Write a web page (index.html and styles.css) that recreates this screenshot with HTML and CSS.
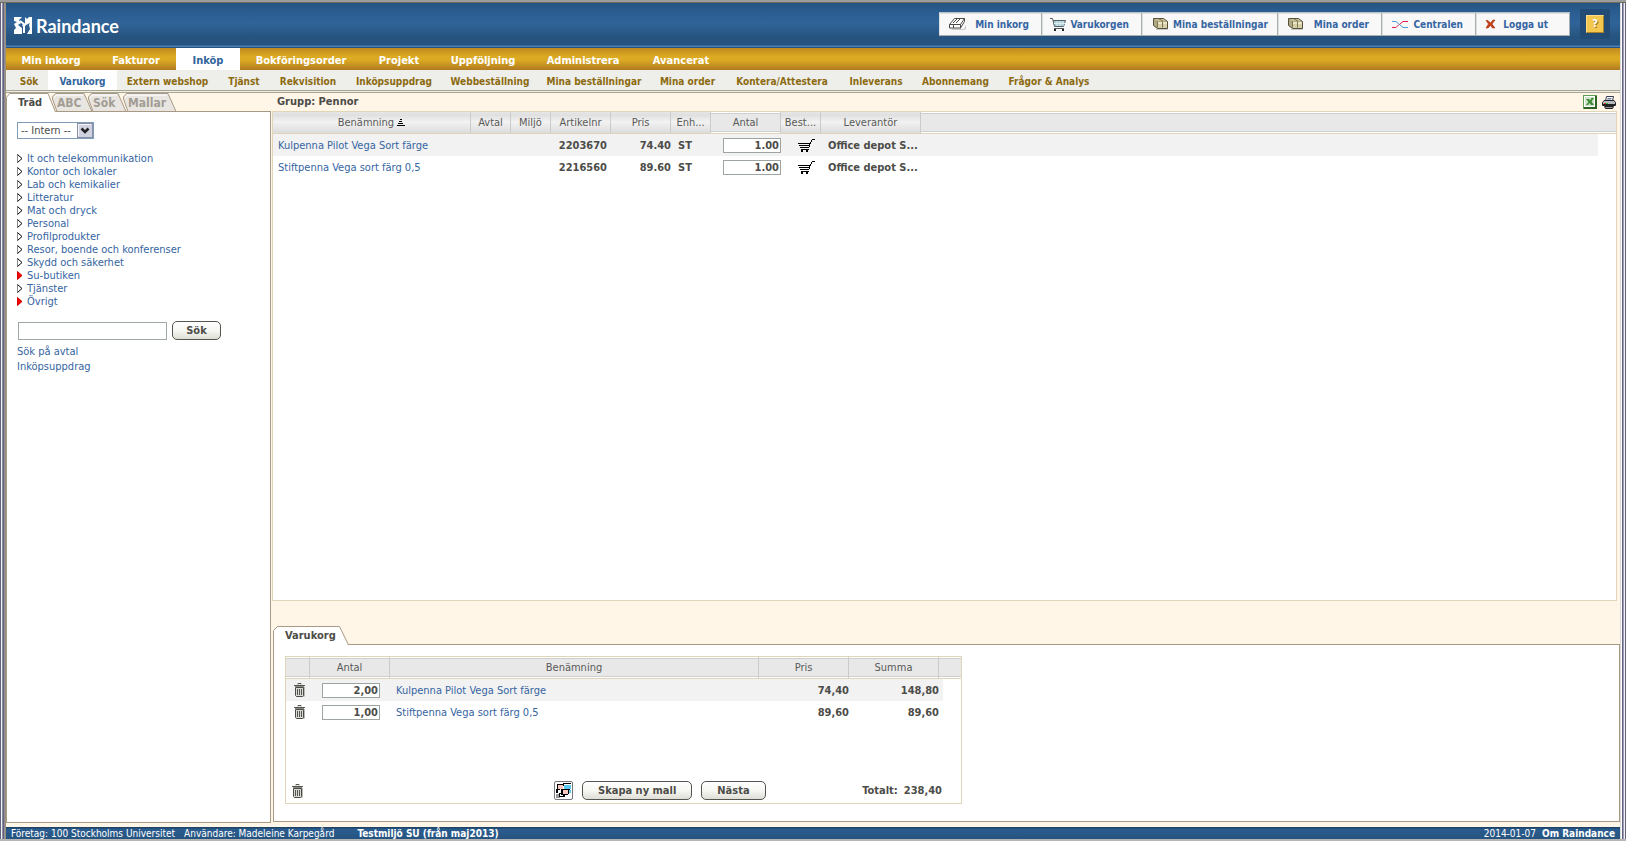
FILE: index.html
```html
<!DOCTYPE html>
<html lang="sv">
<head>
<meta charset="utf-8">
<title>Raindance</title>
<link rel="stylesheet" href="styles.css">
</head>
<body>
<svg width="0" height="0" class="defs" aria-hidden="true">
  <defs>
    <symbol id="cart" viewBox="0 0 17 13" shape-rendering="crispEdges">
      <path d="M14 0h3v1h-3zM13 1h1v2h-1zM12 3h1v2h-1zM0 4h13v1H0zM11 5h1v3h-1zM1 6h11v1H1zM2 8h9v1H2zM3 10h8v1H3zM3 11h2v2H3zM8 11h2v2H8z" fill="#000"/>
    </symbol>
    <symbol id="trash" viewBox="0 0 12 14">
      <path d="M2 4h9v9l-1 1H2z" fill="#b9b9b4"/>
      <path d="M1.500 4.500h8v8l-1 1h-6l-1-1z" fill="#d8d8d4" stroke="#4b4b47"/>
      <path d="M0 2.500h11M4 1.500V.5h3v1M3.500 6v6M5.500 6v6M7.500 6v6" stroke="#55554f" fill="none"/>
      <path d="M1 3.500h9" stroke="#8a8a84"/>
    </symbol>
    <symbol id="boxes" viewBox="0 0 16 12">
      <path d="M3 11h12v1H3z" fill="#c9c9c9"/>
      <path d="M.5.5h10l4 3v7h-10l-4-3z" fill="#b0a882" stroke="#55513a"/>
      <path d="M5 4h9v6H5z" fill="#d6cfa8"/>
      <path d="M2 1h8l3 2H5z" fill="#c9c199"/>
      <path d="M5 4h9v2H5z" fill="#ece6c6"/>
      <path d="M4.500 3.500v6M9.500 3.500v6M6 1l4 2" stroke="#7a7554" fill="none"/>
    </symbol>
    <symbol id="open" viewBox="0 0 6 9">
      <path d="M.5.5v8l4.500-4z" fill="#fff" stroke="#000"/>
      <path d="M.5.5v8" stroke="#888"/>
    </symbol>
    <symbol id="openred" viewBox="0 0 6 9">
      <path d="M.5.5v8l4.500-4z" fill="#f00" stroke="#d00000"/>
    </symbol>
  </defs>
</svg>

<div class="frame">
  <header class="top">
    <a class="logo" href="#" aria-label="Raindance">
      <svg width="18" height="17" viewBox="0 0 18 17" aria-hidden="true">
        <path d="M0 0h8L5 3l2 3-3 2 4 3v6H0v-4l2-2-2-4 3-2-3-1z" fill="#fff"/>
        <path d="M11 0l2 2 2-2h3v17h-5l3-5-1-4 1-2-4 2-2 3-2-3 3-2z" fill="#fff"/>
        <path d="M6 4l4 3M10 10v6" stroke="#fff" stroke-width="2" fill="none"/>
      </svg>
      <span>Raindance</span>
    </a>
    <nav class="tools">
      <a href="#"><svg width="17" height="12" viewBox="0 0 17 12" aria-hidden="true"><path d="M2 11h13l2-4v4l-2 1H3z" fill="#c8c8c8"/><path d="M.5 6.500l5-6h10v3l-4 6.500H.5z" fill="#fff" stroke="#4a4a46"/><path d="M.5 6.500h11l4-6M11.500 6.500v4M4 5l4-4M7 5l4-4M4.500 7v3" stroke="#4a4a46" fill="none"/></svg><span>Min inkorg</span></a>
      <a href="#"><svg width="17" height="13" viewBox="0 0 17 13" aria-hidden="true"><path d="M3 3h12l-1 5H4z" fill="#a9ccd6"/><path d="M0 .5h2.500l2 8h9l2-6H3M4 10.500h10" stroke="#555f62" fill="none"/><path d="M4 5.500h11M7 3v5M10 3v5M13 3v5" stroke="#dceef2" fill="none"/><path d="M4 11h2v2H4zM12 11h2v2h-2z" fill="#222"/></svg><span>Varukorgen</span></a>
      <a href="#"><svg width="16" height="12" aria-hidden="true"><use href="#boxes"/></svg><span>Mina beställningar</span></a>
      <a href="#"><svg width="16" height="12" aria-hidden="true"><use href="#boxes"/></svg><span>Mina order</span></a>
      <a href="#"><svg width="16" height="9" viewBox="0 0 16 9" aria-hidden="true"><path d="M0 1.500h4l7 6h5" stroke="#4e9bd8" stroke-width="1" fill="none"/><path d="M0 7.500h4l3-3M8 4l3-2.500h5" stroke="#e8184a" stroke-width="1" fill="none"/></svg><span>Centralen</span></a>
      <a href="#"><svg width="11" height="10" viewBox="0 0 11 10" aria-hidden="true"><path d="M1 1.500h2l2.500 2.500L8 1h2L7 5l3 4H7.500l-2-2.500L3 9H1l2.500-4z" fill="#c8401a" stroke="#a8320f" stroke-width=".6"/></svg><span>Logga ut</span></a>
    </nav>
    <button class="help" type="button" aria-label="Hjälp"><span>?</span></button>
  </header>

  <nav class="main">
    <a href="#">Min inkorg</a><a href="#">Fakturor</a><a href="#" class="on">Inköp</a><a href="#">Bokföringsorder</a><a href="#">Projekt</a><a href="#">Uppföljning</a><a href="#">Administrera</a><a href="#">Avancerat</a>
  </nav>
  <nav class="sub">
    <a href="#">Sök</a><a href="#" class="on">Varukorg</a><a href="#">Extern webshop</a><a href="#">Tjänst</a><a href="#">Rekvisition</a><a href="#">Inköpsuppdrag</a><a href="#">Webbeställning</a><a href="#">Mina beställningar</a><a href="#">Mina order</a><a href="#">Kontera/Attestera</a><a href="#">Inleverans</a><a href="#">Abonnemang</a><a href="#">Frågor &amp; Analys</a>
  </nav>

  <div class="body">
    <aside class="side">
      <div class="tabs">
        <button type="button" class="tab on"><svg width="50" height="19" viewBox="0 0 50 19" aria-hidden="true"><path d="M.5 19V4.500l3-4H42L49.500 19" fill="#fff" stroke="#a89984"/></svg><span>Träd</span></button>
        <button type="button" class="tab"><svg width="43" height="19" viewBox="0 0 43 19" aria-hidden="true"><path d="M5 18.500L.5 6V4l3-3.500H32l8 18z" fill="#e9e6e2" stroke="#a89984"/><path d="M2 5l2-3h27" fill="none" stroke="#fff"/></svg><span>ABC</span></button>
        <button type="button" class="tab"><svg width="43" height="19" viewBox="0 0 43 19" aria-hidden="true"><path d="M5 18.500L.5 6V4l3-3.500H30l8 18z" fill="#e9e6e2" stroke="#a89984"/><path d="M2 5l2-3h25" fill="none" stroke="#fff"/></svg><span>Sök</span></button>
        <button type="button" class="tab"><svg width="55" height="19" viewBox="0 0 55 19" aria-hidden="true"><path d="M5 18.500L.5 6V4l3-3.500H45l8 18z" fill="#e9e6e2" stroke="#a89984"/><path d="M2 5l2-3h40" fill="none" stroke="#fff"/></svg><span>Mallar</span></button>
      </div>
      <div class="panel">
        <div class="pick">
          <select aria-label="Katalog"><option>-- Intern --</option></select>
          <svg width="16" height="15" viewBox="0 0 16 15" aria-hidden="true"><rect x=".5" y=".5" width="15" height="14" fill="#d0d2e0" stroke="#8a8fa8"/><path d="M1.500 13V1.500H14" stroke="#f4f4fa" fill="none"/><path d="M4.500 5.500L8 9l3.500-3.500" stroke="#222" stroke-width="2.500" fill="none"/></svg>
        </div>
        <ul class="tree">
          <li><svg width="6" height="9"><use href="#open"/></svg><a href="#">It och telekommunikation</a></li>
          <li><svg width="6" height="9"><use href="#open"/></svg><a href="#">Kontor och lokaler</a></li>
          <li><svg width="6" height="9"><use href="#open"/></svg><a href="#">Lab och kemikalier</a></li>
          <li><svg width="6" height="9"><use href="#open"/></svg><a href="#">Litteratur</a></li>
          <li><svg width="6" height="9"><use href="#open"/></svg><a href="#">Mat och dryck</a></li>
          <li><svg width="6" height="9"><use href="#open"/></svg><a href="#">Personal</a></li>
          <li><svg width="6" height="9"><use href="#open"/></svg><a href="#">Profilprodukter</a></li>
          <li><svg width="6" height="9"><use href="#open"/></svg><a href="#">Resor, boende och konferenser</a></li>
          <li><svg width="6" height="9"><use href="#open"/></svg><a href="#">Skydd och säkerhet</a></li>
          <li><svg width="6" height="9"><use href="#openred"/></svg><a href="#">Su-butiken</a></li>
          <li><svg width="6" height="9"><use href="#open"/></svg><a href="#">Tjänster</a></li>
          <li><svg width="6" height="9"><use href="#openred"/></svg><a href="#">Övrigt</a></li>
        </ul>
        <form class="find"><input type="text" aria-label="Sök artikel"><button type="button" class="btn">Sök</button></form>
        <div class="links"><a href="#">Sök på avtal</a><a href="#">Inköpsuppdrag</a></div>
      </div>
    </aside>

    <main class="content">
      <div class="title">
        <h1>Grupp: Pennor</h1>
        <a href="#" aria-label="Excel"><svg width="14" height="14" viewBox="0 0 14 14" aria-hidden="true"><rect x=".5" y=".5" width="13" height="13" fill="#fff" stroke="#5c9d52"/><path d="M1 13h12V1" stroke="#2c6424" stroke-width="2" fill="none"/><rect x="2" y="2" width="9" height="9" fill="#cfe3ca"/><path d="M3 4h3l1 1.500L8.500 3H11L8.500 6.500 11 10H8L6.500 8 5 10H3l2.500-3z" fill="#3a8a34"/></svg></a>
        <a href="#" aria-label="Skriv ut"><svg width="14" height="13" viewBox="0 0 14 13" aria-hidden="true"><path d="M3.500 5l1-4.500h7L10.500 5z" fill="#fff" stroke="#333a50"/><path d="M5.500 2.500h4M5 4h4" stroke="#6a7aa8"/><path d="M2 4.500h10l1.500 2v3H.5v-3z" fill="#b8b8c0" stroke="#222"/><path d="M1 8h12v2H1z" fill="#222"/><path d="M2 7h2v1H2z" fill="#d33"/><path d="M4 7h2v1H4z" fill="#3b3"/><path d="M2.500 10.500h9l-1 2h-7z" fill="#999" stroke="#222"/></svg></a>
      </div>
      <div class="list">
        <table class="items">
          <colgroup><col class="w198"><col class="w40"><col class="w40"><col class="w60"><col class="w60"><col class="w40"><col class="w70"><col class="w40"><col class="w100"><col><col class="w18"></colgroup>
          <thead><tr>
            <th class="sort">Benämning <svg width="8" height="7" viewBox="0 0 8 7" aria-hidden="true" shape-rendering="crispEdges"><path d="M3 0h2v1H3zM2 2h3v1H2zM1 4h5v1H1zM0 6h8v1H0z"/></svg></th><th class="sort">Avtal</th><th class="sort">Miljö</th><th class="sort">Artikelnr</th><th class="sort">Pris</th><th class="sort">Enh...</th><th>Antal</th><th class="sort">Best...</th><th class="sort">Leverantör</th><th colspan="2"></th>
          </tr></thead>
          <tbody>
            <tr class="odd"><td><a href="#">Kulpenna Pilot Vega Sort färge</a></td><td></td><td></td><td class="num pad">2203670</td><td class="num">74.40</td><td class="unit">ST</td><td class="num"><input type="text" value="1.00" aria-label="Antal Kulpenna"></td><td class="mid"><button type="button" class="icon" aria-label="Beställ"><svg width="17" height="13"><use href="#cart"/></svg></button></td><td class="unit">Office depot S...</td><td></td><td></td></tr>
            <tr><td><a href="#">Stiftpenna Vega sort färg 0,5</a></td><td></td><td></td><td class="num pad">2216560</td><td class="num">89.60</td><td class="unit">ST</td><td class="num"><input type="text" value="1.00" aria-label="Antal Stiftpenna"></td><td class="mid"><button type="button" class="icon" aria-label="Beställ"><svg width="17" height="13"><use href="#cart"/></svg></button></td><td class="unit">Office depot S...</td><td></td><td></td></tr>
          </tbody>
        </table>
      </div>
      <section class="basket">
        <div class="tabs">
          <button type="button" class="tab on"><svg width="76" height="19" viewBox="0 0 76 19" aria-hidden="true"><path d="M.5 19V4.500l4-4H66.500L75.500 19" fill="#fff" stroke="#a89984"/></svg><span>Varukorg</span></button>
        </div>
        <div class="panel">
          <div class="box">
            <table class="items">
              <colgroup><col class="w24"><col class="w80"><col><col class="w90"><col class="w90"><col class="w4"><col class="w18"></colgroup>
              <thead><tr><th></th><th>Antal</th><th>Benämning</th><th>Pris</th><th>Summa</th><th colspan="2"></th></tr></thead>
              <tbody>
                <tr class="odd"><td class="bin"><button type="button" class="icon" aria-label="Ta bort"><svg width="12" height="14"><use href="#trash"/></svg></button></td><td class="qty"><input type="text" value="2,00" aria-label="Antal Kulpenna i varukorg"></td><td class="name"><a href="#">Kulpenna Pilot Vega Sort färge</a></td><td class="num">74,40</td><td class="num">148,80</td><td></td><td></td></tr>
                <tr><td class="bin"><button type="button" class="icon" aria-label="Ta bort"><svg width="12" height="14"><use href="#trash"/></svg></button></td><td class="qty"><input type="text" value="1,00" aria-label="Antal Stiftpenna i varukorg"></td><td class="name"><a href="#">Stiftpenna Vega sort färg 0,5</a></td><td class="num">89,60</td><td class="num">89,60</td><td></td><td></td></tr>
              </tbody>
            </table>
            <div class="actions">
              <button type="button" class="icon" aria-label="Töm varukorg"><svg width="12" height="14"><use href="#trash"/></svg></button>
              <div class="group">
                <button type="button" class="square" aria-label="Fördela"><svg width="15" height="15" viewBox="0 0 15 15" aria-hidden="true" shape-rendering="crispEdges"><path d="M2 1h5v5H2z" fill="#f8c8c0"/><path d="M8 2h7v4H8z" fill="#5cc8f0"/><path d="M7 7h5v4H7z" fill="#f8c8c0"/><path d="M12 7h3v3h-3z" fill="#5cc8f0"/><path d="M0 11h4v4H0z" fill="#999"/><path d="M1 1h6v1H2v4H1zM7 0h8v1H8v2H7zM0 6h4v1H2v3H0zM5 6h9v1H7v5H5zM12 7h1v4h-1zM3 10h2v1H4v3H3zM7 11h5v1H9v2H4v-1h3z" fill="#000"/></svg></button>
                <button type="button" class="btn wide">Skapa ny mall</button>
                <button type="button" class="btn wide">Nästa</button>
              </div>
              <p class="sum"><span>Totalt:</span><span>238,40</span></p>
            </div>
          </div>
        </div>
      </section>
    </main>
  </div>

  <footer class="status">
    <span>Företag: 100 Stockholms Universitet</span><span>Användare: Madeleine Karpegård</span><b>Testmiljö SU (från maj2013)</b>
    <span class="date">2014-01-07</span><a href="#">Om Raindance</a>
  </footer>
</div>
</body>
</html>
```
FILE: styles.css
```css
* { box-sizing: border-box; }
body {
  margin: 0;
  font: 11px/13px "DejaVu Sans Condensed", "DejaVu Sans", sans-serif;
  color: #4c4c48;
}
a { color: #3565a2; text-decoration: none; }
button, input, select { font: inherit; color: inherit; margin: 0; }
button { background: none; border: 0; padding: 0; cursor: pointer; }
svg { display: block; flex: none; }
.defs { position: absolute; }

/* window frame */
.frame {
  min-height: 100vh;
  display: flex;
  flex-direction: column;
  padding: 3px 6px 2px;
  background:
    linear-gradient(#9c9c9c 0 2px, #6f6a60 2px 3px) 0 0 / 100% 3px no-repeat,
    linear-gradient(#b5b5b5, #b5b5b5) 0 100% / 100% 2px no-repeat,
    linear-gradient(90deg, #63637f 0 1px, #f2f2f6 1px 2px, #8d8da2 2px 3px, #63637f 3px 4px, #8f8f98 4px 5px, #9c9078 5px 6px) 0 0 / 6px 100% no-repeat,
    linear-gradient(90deg, #d9d9d9 0 1px, #ffffff 1px 2px, #63637f 2px 3px, #9d9db5 3px 4px, #f2f2f6 4px 5px, #63637f 5px 6px) 100% 0 / 6px 100% no-repeat;
}

/* header */
.top {
  height: 45px;
  display: flex;
  align-items: center;
  padding: 0 10px 3px 8px;
  background: linear-gradient(#265480, #2a5c90 8px, #306499 20px, #26547f 34px, #25527f 42px, #4d80b8 43px, #4d80b8 44px, #25527f 44px);
}
.logo { display: flex; align-items: center; gap: 4px; margin-right: auto; padding-top: 3px; color: #fff; }
.logo span { font: bold 18px/20px Lato, "DejaVu Sans", sans-serif; }
.tools {
  display: grid;
  grid-template-columns: 103px 100px 136px 104px 94px 94px;
  height: 24px;
  background: #f8f8f8;
  border-top: 1px solid #b9c3cb;
  border-bottom: 1px solid #a9adb0;
  margin-right: 10px;
}
.tools a {
  display: flex;
  align-items: center;
  justify-content: space-between;
  padding: 0 12px 0 10px;
  border-right: 1px solid #a9adb0;
  box-shadow: inset 1px 1px #dcdfe0;
  font-weight: bold;
  font-size: 10px;
  white-space: nowrap;
}
.tools a:nth-child(2) { padding-left: 8px; }
.tools a:nth-child(3) { padding: 0 9px 0 11px; }
.tools a:nth-child(6) { padding: 0 21px 0 9px; }
.help {
  width: 30px;
  height: 30px;
  padding: 6px;
  background: #224b75;
}
.help span {
  display: block;
  height: 18px;
  background: #f3c64f;
  border: 1px solid #f9dd8a;
  border-right-color: #a9822a;
  border-bottom-color: #a9822a;
  color: #fff;
  font-weight: bold;
  line-height: 16px;
  text-shadow: 1px 1px #a07a28;
}

/* navigation */
.main, .sub { display: grid; font-weight: bold; text-align: center; white-space: nowrap; }
.main {
  grid-template-columns: 90px 80px 64px 122px 74px 94px 106px 90px;
  height: 22px;
  background: linear-gradient(#c08a20, #ddab22 9px, #dcaa22 12px, #b07a20);
  line-height: 26px;
}
.main a { color: #fff; height: 22px; }
.main a.on, .sub a.on { background: #fff; color: #31649c; }
.sub {
  grid-template-columns: 38px 69px 101px 52px 76px 96px 96px 112px 75px 114px 74px 85px 102px;
  padding-left: 4px;
  height: 23px;
  background: #eeefeb;
  border-bottom: 3px double #a8a690;
  font-size: 10px;
  line-height: 23px;
}
.sub a { color: #8c6a10; height: 20px; }

/* page body */
.body {
  flex: 1;
  display: grid;
  grid-template-columns: 265px minmax(0, 1fr);
  gap: 1px;
  background: #fff6e8;
  padding-bottom: 4px;
}
.side { display: flex; flex-direction: column; }
.tabs { display: flex; height: 19px; margin-bottom: -1px; position: relative; }
.tab { position: relative; height: 19px; font-weight: bold; text-align: left; color: #a29d94; padding-left: 5px; }
.tab svg { position: absolute; left: 0; top: 0; }
.tab span { position: relative; font-size: 12px; line-height: 20px; }
.tab.on { color: #4c4c48; padding-left: 12px; }
.tab.on span { font-size: 11px; }
.side .tab:nth-child(1) { width: 46px; z-index: 1; }
.side .tab:nth-child(2) { width: 36px; }
.side .tab:nth-child(3) { width: 35px; }
.side .tab:nth-child(4) { width: 55px; }
.panel { flex: 1; background: #fff; border: 1px solid #a89984; }
.side .panel { padding: 10px; }

.pick { position: relative; width: 77px; }
.pick select {
  display: block;
  appearance: none;
  width: 77px;
  height: 17px;
  padding: 0 3px;
  border: 1px solid #7f9db9;
  border-radius: 0;
  background: #fff;
}
.pick svg { position: absolute; right: 1px; top: 1px; pointer-events: none; }
.tree { list-style: none; margin: 13px 0; padding: 0; }
.tree li { display: flex; align-items: center; gap: 4px; height: 13px; }
.find { display: flex; align-items: center; gap: 5px; padding-left: 1px; }
.find input { width: 149px; height: 18px; border: 1px solid #a0a8a4; padding: 0 2px; }
.btn {
  height: 19px;
  min-width: 49px;
  padding: 0 13px;
  border: 1px solid #55554f;
  border-radius: 5px;
  background: linear-gradient(#fff, #f6f6f2 9px, #deded6);
  font-weight: bold;
  line-height: 17px;
}
.btn.wide { padding: 0 15px; }
.links { display: flex; flex-direction: column; padding-top: 4px; line-height: 15px; }

/* article list */
.content { display: flex; flex-direction: column; }
.title { display: flex; align-items: center; gap: 5px; height: 18px; padding: 0 4px 0 5px; }
.title h1 { margin: 0 auto 0 0; font-size: 11px; line-height: 16px; }
.list { flex: 1; background: #fff; border: 1px solid #e0d5b8; margin-right: 3px; }
.items { width: 100%; table-layout: fixed; border-collapse: separate; border-spacing: 0; }
.items th, .items td { padding: 0; height: 22px; white-space: nowrap; }
.items th {
  font-weight: normal;
  color: #5a5a58;
  background: linear-gradient(#fff 1px, #cfcfcf 1px 2px, #e8e8e8 2px 19px, #cfcfcf 19px 20px, #fff 20px);
  border-right: 1px solid #cbcbcb;
  border-bottom: 1px solid #e0d5b8;
}
.items th.sort { background: linear-gradient(#e6e6e6, #e0e0e0 3px, #f2f2f2 10px, #dcdcdc); }
.items th:last-child { border-right: 0; }
.items th svg { display: inline-block; }
.items td { font-weight: bold; }
.items td:first-child, .items td.name { font-weight: normal; padding-left: 5px; }
.items .odd td:not(:last-child) { background: #f2f2f2; }
.items td.num { text-align: right; }
.items td.pad { padding-right: 4px; }
.items td.unit { padding-left: 7px; }
.items td.mid { text-align: center; padding-left: 10px; }
.items td.name { padding-left: 6px; }
.items td.bin { padding-left: 8px; }
.items input {
  display: block;
  width: 58px;
  height: 15px;
  margin-left: auto;
  padding: 0 1px 0 2px;
  border: 1px solid #9da5a2;
  background: #fff;
  text-align: right;
}
.items .qty { padding-right: 10px; }
.icon { display: inline-block; vertical-align: middle; }
.w4 { width: 4px; } .w18 { width: 18px; } .w24 { width: 24px; }
.w40 { width: 40px; } .w60 { width: 60px; } .w70 { width: 70px; }
.w80 { width: 80px; } .w90 { width: 90px; } .w100 { width: 100px; } .w198 { width: 198px; }

/* basket */
.basket { margin: 25px 0 1px 1px; }
.basket .panel { padding: 11px 11px 17px; }
.box { width: 677px; border: 1px solid #e0d5b8; }
.actions {
  display: grid;
  grid-template-columns: 262px auto 1fr;
  align-items: center;
  padding: 58px 19px 3px 6px;
}
.actions .group { display: flex; align-items: center; gap: 9px; }
.square { border: 1px solid #77777f; border-radius: 2px; padding: 1px; background: #fff; }
.sum { display: flex; justify-content: flex-end; gap: 6px; margin: 0; font-weight: bold; }

/* status bar */
.status {
  display: flex;
  align-items: center;
  height: 12px;
  padding: 0 5px;
  background: linear-gradient(#1f4468 1px, #2a5c90 2px, #26547f);
  color: #fff;
  font-size: 10px;
}
.status span + span { margin-left: 9px; }
.status b { margin-left: 23px; }
.status .date { margin-left: auto; }
.status a { margin-left: 6px; color: #fff; font-weight: bold; }
```
